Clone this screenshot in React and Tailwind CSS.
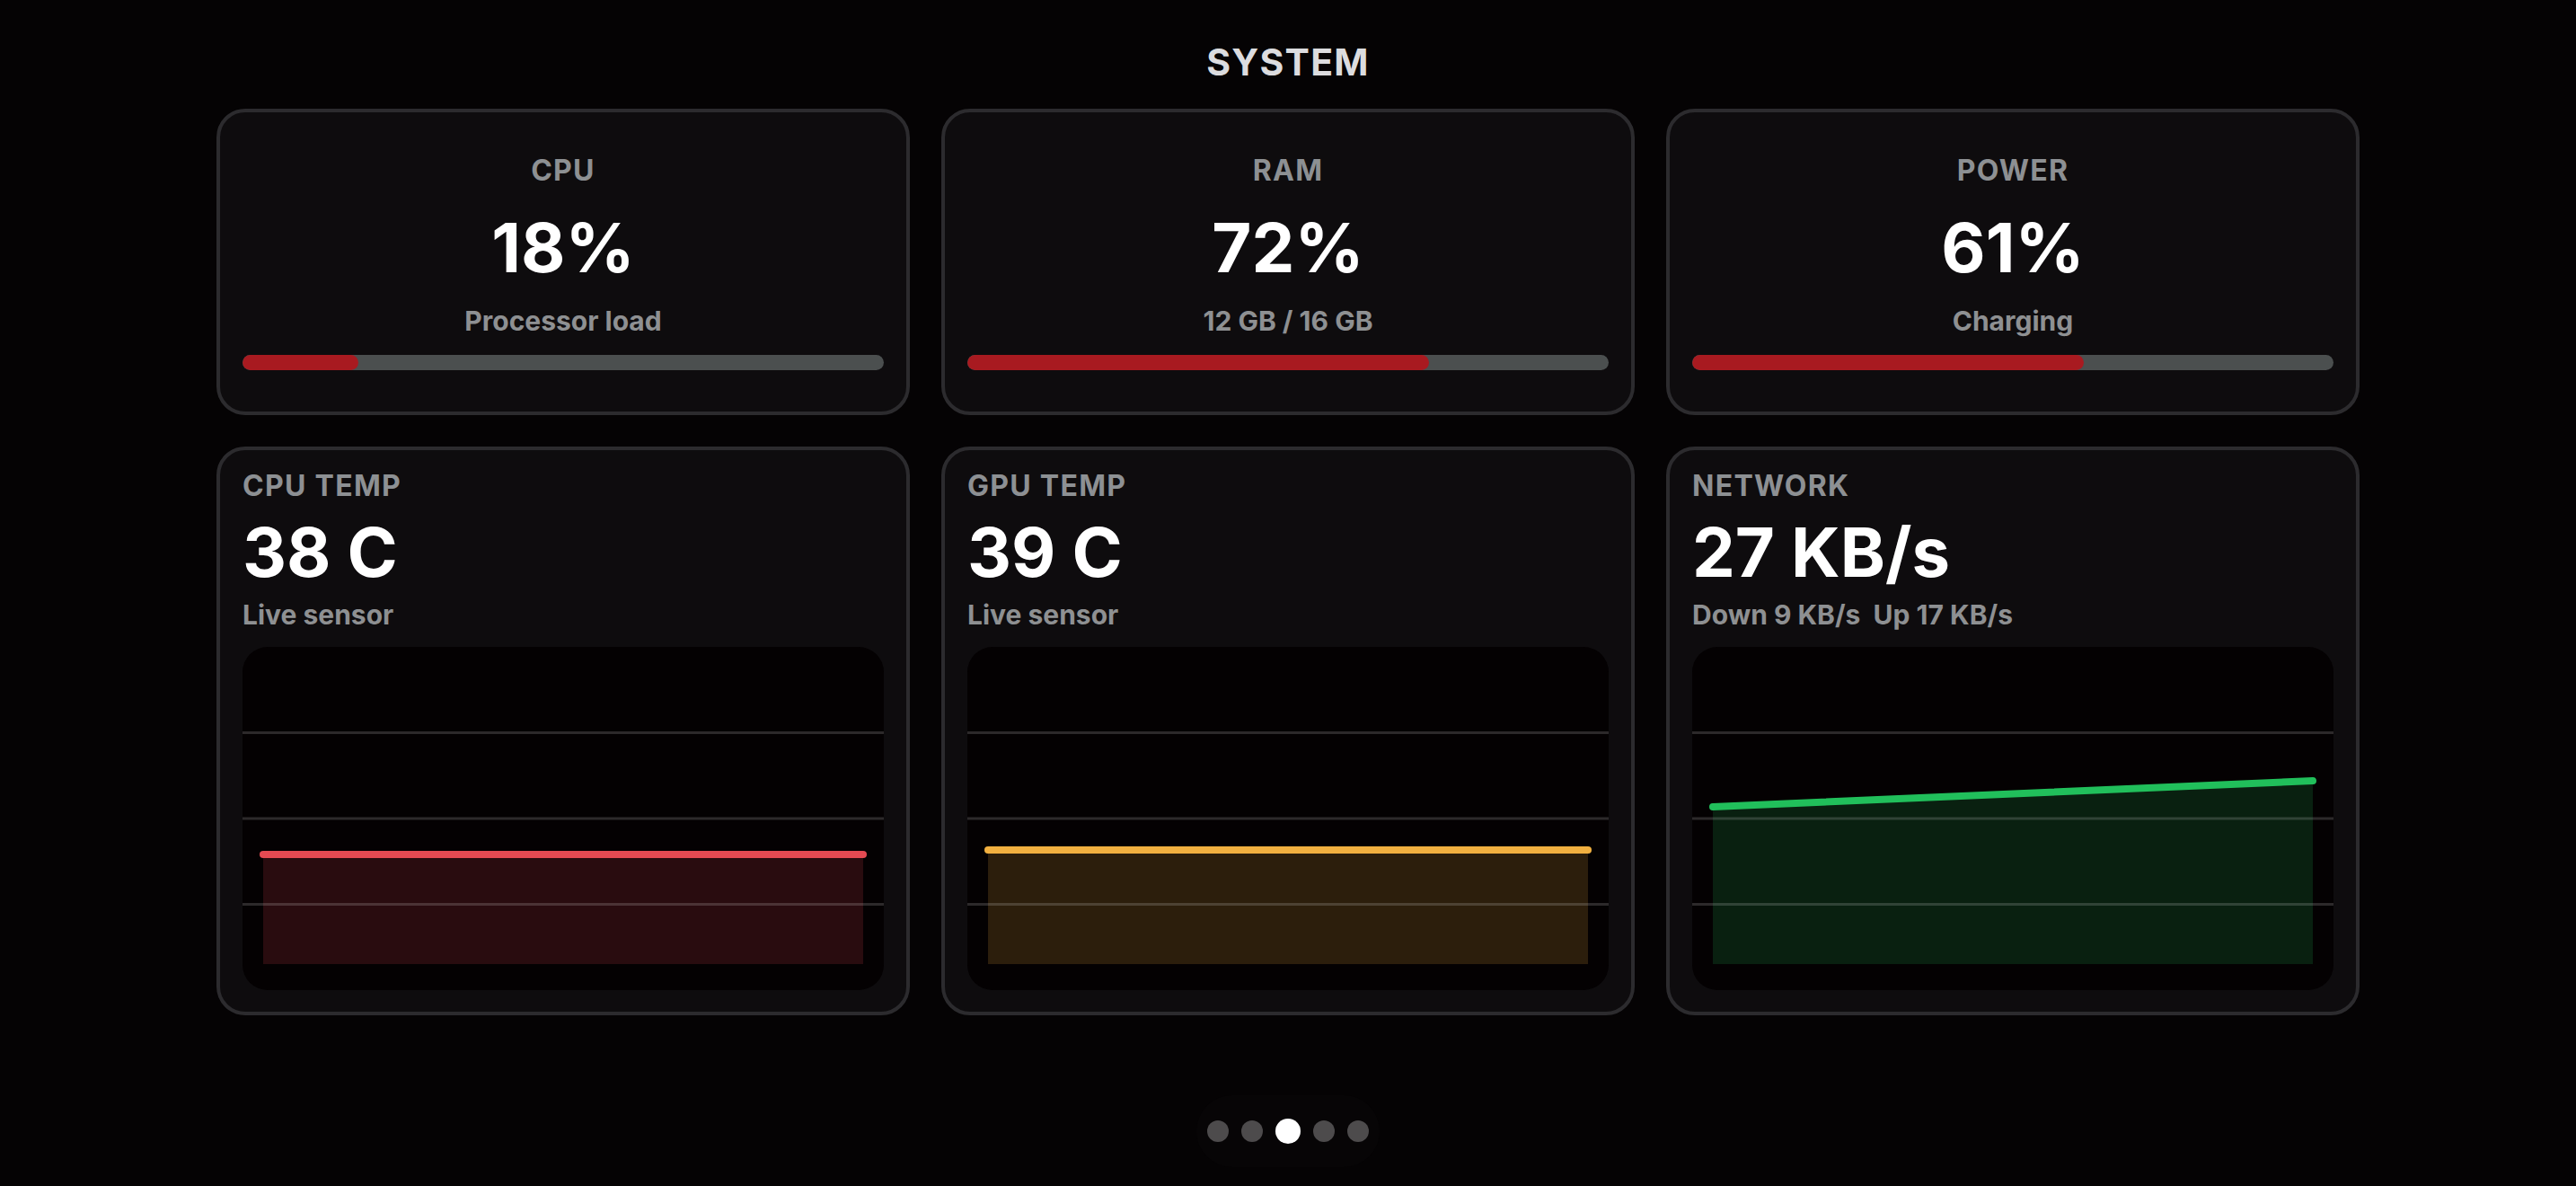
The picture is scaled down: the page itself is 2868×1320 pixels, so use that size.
const font = { fontFamily: "Inter, 'Noto Sans', 'Liberation Sans', sans-serif" };

function UsageCard({ label, value, sub, pct }) {
  return (
    <div className="flex flex-col items-center rounded-[32px] border-[4px] border-[#2c2b2e] bg-[#0e0c0e] px-[25px] pt-[46px] pb-[46px]">
      <div className="text-[32px] leading-[38px] font-bold tracking-[0.04em] text-[#8d9093]">{label}</div>
      <div className="mt-[26px] text-[76px] leading-[80px] font-bold text-white">{value}</div>
      <div className="mt-[24px] text-[30px] leading-[36px] font-bold text-[#8e9092]">{sub}</div>
      <div className="mt-[20px] h-[17px] w-full rounded-full bg-[#4b4f4f] overflow-hidden">
        <div className="h-full rounded-full bg-[#a81a20]" style={{ width: `${pct}%` }} />
      </div>
    </div>
  );
}

function Chart({ color, y1, y2 }) {
  const x1 = 23;
  const x2 = 691;
  const bottom = 353;
  return (
    <div className="mt-[18px] h-[382px] w-full rounded-[28px] bg-[#040102] overflow-hidden">
      <svg viewBox="0 0 716 382" width="716" height="382" className="block">
        <polygon points={`${x1},${y1} ${x2},${y2} ${x2},${bottom} ${x1},${bottom}`} fill={color} fillOpacity="0.17" />
        {[95.5, 191, 286.5].map((y) => (
          <line key={y} x1="0" x2="716" y1={y} y2={y} stroke="#ffffff" strokeOpacity="0.16" strokeWidth="3" />
        ))}
        <line x1={x1} y1={y1} x2={x2} y2={y2} stroke={color} strokeWidth="8" strokeLinecap="round" />
      </svg>
    </div>
  );
}

function SensorCard({ label, value, sub, color, y1, y2 }) {
  return (
    <div className="flex flex-col rounded-[32px] border-[4px] border-[#2c2b2e] bg-[#0e0c0e] px-[25px] pt-[21px] pb-[24px]">
      <div className="text-[32px] leading-[38px] font-bold tracking-[0.04em] text-[#8d9093]">{label}</div>
      <div className="mt-[14px] text-[76px] leading-[80px] font-bold text-white">{value}</div>
      <div className="mt-[12px] text-[30px] leading-[36px] font-bold text-[#8e9092] whitespace-pre">{sub}</div>
      <Chart color={color} y1={y1} y2={y2} />
    </div>
  );
}

export default function App() {
  return (
    <div className="min-h-[1320px] w-full bg-[#050304] flex flex-col items-center pt-[45px]" style={font}>
      <h1 className="text-[41px] leading-[48px] font-bold tracking-[0.03em] text-[#dcdcdf]">SYSTEM</h1>

      <div className="mt-[28px] grid w-[2386px] grid-cols-3 gap-x-[35px] gap-y-[35px]">
        <UsageCard label="CPU" value="18%" sub="Processor load" pct={18} />
        <UsageCard label="RAM" value="72%" sub="12 GB / 16 GB" pct={72} />
        <UsageCard label="POWER" value="61%" sub="Charging" pct={61} />

        <SensorCard label="CPU TEMP" value="38 C" sub="Live sensor" color="#e44a52" y1={231} y2={231} />
        <SensorCard label="GPU TEMP" value="39 C" sub="Live sensor" color="#f2b040" y1={226} y2={226} />
        <SensorCard label="NETWORK" value="27 KB/s" sub={"Down 9 KB/s  Up 17 KB/s"} color="#21bf5b" y1={178} y2={149} />
      </div>

      {/* page dots */}
      <div className="mt-[89px] flex items-center gap-[14px] rounded-full bg-[#070506] px-[12px] py-[26px]">
        <span className="h-[24px] w-[24px] rounded-full bg-[#4d4b4c]" />
        <span className="h-[24px] w-[24px] rounded-full bg-[#4d4b4c]" />
        <span className="h-[28px] w-[28px] rounded-full bg-white" />
        <span className="h-[24px] w-[24px] rounded-full bg-[#4d4b4c]" />
        <span className="h-[24px] w-[24px] rounded-full bg-[#4d4b4c]" />
      </div>
    </div>
  );
}
